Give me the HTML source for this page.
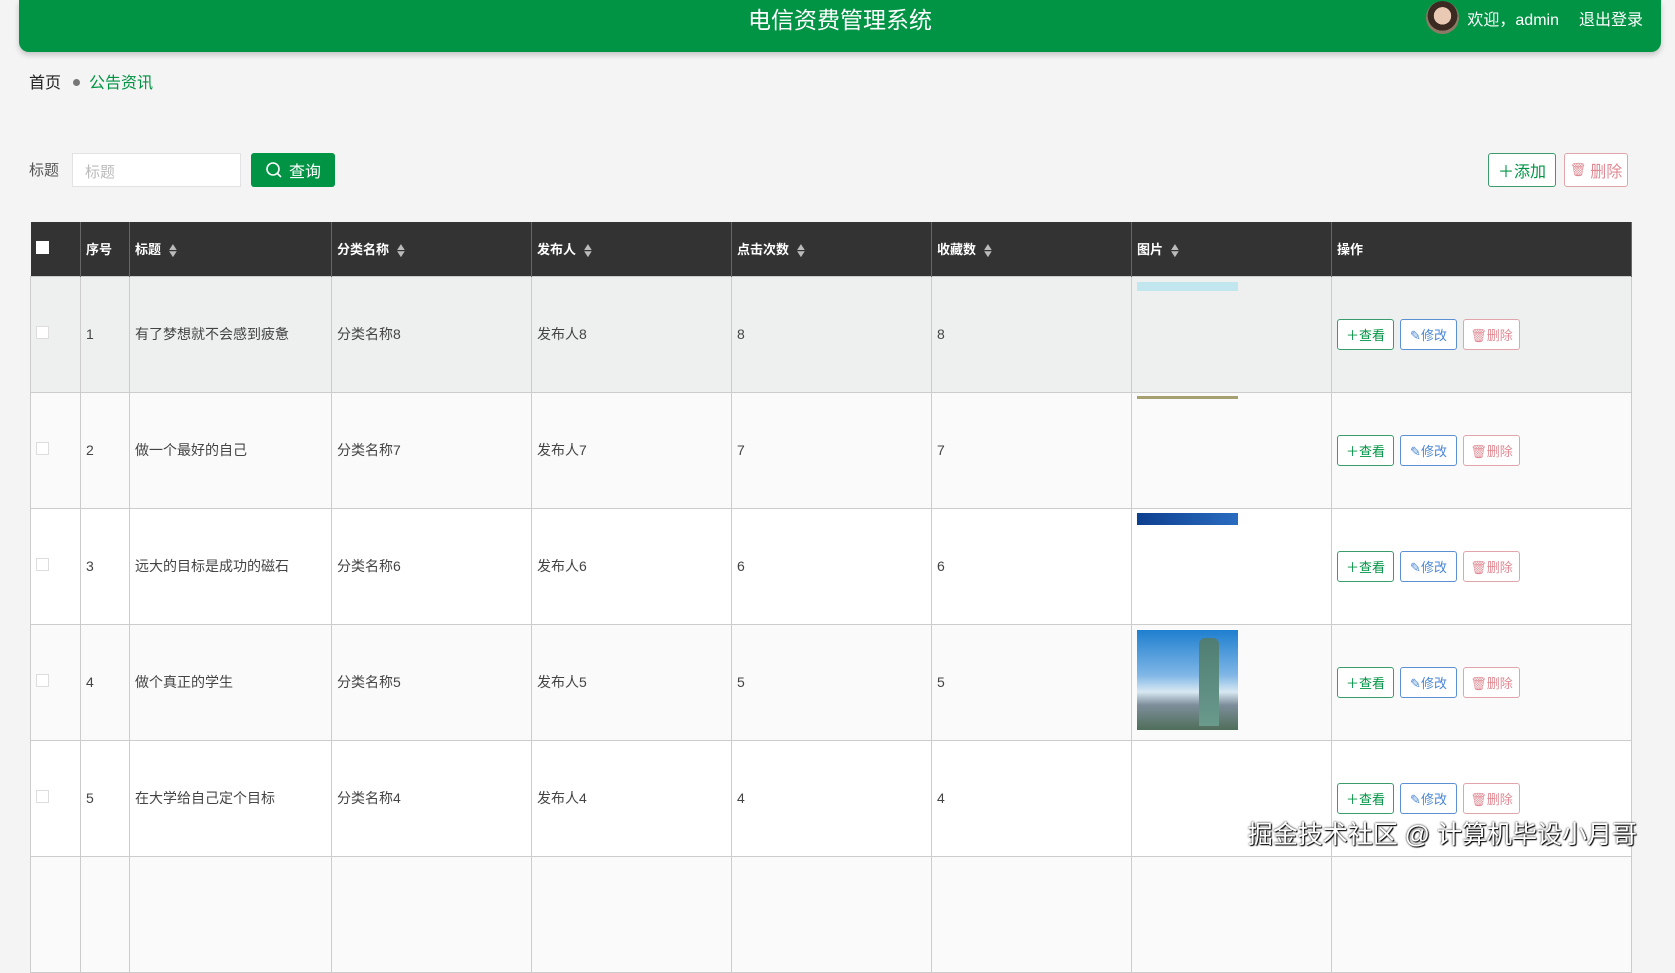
<!DOCTYPE html>
<html><head><meta charset="utf-8"><style>
*{box-sizing:border-box;margin:0;padding:0}
body{width:1675px;height:870px;overflow:hidden;background:#f4f4f4;font-family:"Liberation Sans","Noto Sans CJK SC",sans-serif;position:relative;color:#333}
.hdr{position:absolute;left:19px;top:0;width:1642px;height:52px;background:#009444;border-radius:0 0 10px 10px;box-shadow:0 3px 6px rgba(0,0,0,.2)}
.hdr .t{position:absolute;left:0;right:0;top:1px;text-align:center;color:#fff;font-size:23px}
.hdr .u{position:absolute;right:18px;top:1px;color:#fff;font-size:16px;display:flex;align-items:center}
.av{width:33px;height:33px;border-radius:50%;background:radial-gradient(circle at 50% 45%,#e9c9b3 0 35%,#3b2a22 36% 60%,#8d7a66 61%);margin-right:8px}
.bc{position:absolute;left:29px;top:69px;font-size:16px}
.bc b{font-weight:normal;color:#222}
.bc i{display:inline-block;width:7px;height:7px;border-radius:50%;background:#777;margin:0 9px 2px 12px}
.bc span{color:#009444}
.lbl{position:absolute;left:29px;top:159px;font-size:15px;color:#555}
.inp{position:absolute;left:72px;top:153px;width:169px;height:34px;background:#fff;border:1px solid #e2e2e2;font-size:15px;color:#bbb;padding:7px 12px}
.qb{position:absolute;left:251px;top:153px;width:84px;height:34px;background:#009444;border-radius:3px;color:#fff;font-size:16px;display:flex;align-items:center;justify-content:center;gap:6px}
.ob{position:absolute;height:34px;top:153px;border:1px solid;border-radius:3px;background:#fff;font-size:16px;display:flex;align-items:center;justify-content:center;gap:4px}
table{position:absolute;left:30px;top:222px;border-collapse:collapse;width:1601px;table-layout:fixed}
th{background:#333;color:#fff;height:54px;text-align:left;font-size:13px;padding-left:5px;border-right:1px solid #666;font-weight:bold}
td{height:116px;border:1px solid #ccc;font-size:14px;padding-left:5px;color:#444;vertical-align:middle;position:relative}
tr.a td{background:#fafafa}
tr.f td{background:#eef0f0}
.s{display:inline-block;margin-left:7px;font-size:10px;color:#bbb;line-height:7px;vertical-align:middle;transform:scaleX(1.3)}
.cb{width:13px;height:13px;border:1px solid #ddd;background:#fff;display:inline-block}
.btn{display:inline-flex;align-items:center;justify-content:center;gap:3px;width:57px;height:31px;border:1px solid;border-radius:3px;font-size:13px;margin-right:6px;background:#fff}
.g{color:#009444;border-color:#3c9b6a}.bl{color:#4a86d6;border-color:#5d8fd3}.r{color:#e08a93;border-color:#e0a5ab}
.im{position:absolute;left:5px;width:101px}
.wm{position:absolute;right:38px;top:815px;font-size:25px;color:#fff;text-shadow:0 0 2px #000,1px 1px 1px #000}
</style></head><body>
<div class="hdr"><div class="t">电信资费管理系统</div>
<div class="u"><div class="av"></div>欢迎，admin<span style="margin-left:20px">退出登录</span></div></div>
<div class="bc"><b>首页</b><i></i><span>公告资讯</span></div>
<div class="lbl">标题</div>
<div class="inp">标题</div>
<div class="qb"><svg width="18" height="18" viewBox="0 0 18 18" fill="none" stroke="#fff" stroke-width="1.6"><circle cx="8" cy="8" r="6"/><path d="M12.5 12.5L16 16"/></svg>查询</div>
<div class="ob g" style="left:1488px;width:68px">＋添加</div>
<div class="ob r" style="left:1564px;width:64px"><span style="font-size:13px">🗑</span>删除</div>
<table>
<colgroup><col style="width:50px"><col style="width:49px"><col style="width:202px"><col style="width:200px"><col style="width:200px"><col style="width:200px"><col style="width:200px"><col style="width:200px"><col style="width:300px"></colgroup>
<tr><th><span class="cb" style="border:0"></span></th><th>序号</th><th>标题<span class="s">▲<br>▼</span></th><th>分类名称<span class="s">▲<br>▼</span></th><th>发布人<span class="s">▲<br>▼</span></th><th>点击次数<span class="s">▲<br>▼</span></th><th>收藏数<span class="s">▲<br>▼</span></th><th>图片<span class="s">▲<br>▼</span></th><th>操作</th></tr>
<tr class="f"><td><span class="cb"></span></td><td>1</td><td>有了梦想就不会感到疲惫</td><td>分类名称8</td><td>发布人8</td><td>8</td><td>8</td><td><div class="im" style="top:5px;height:9px;background:#c2e6ee"></div></td><td><span class="btn g">＋查看</span><span class="btn bl">✎修改</span><span class="btn r">🗑删除</span></td></tr>
<tr class="a"><td><span class="cb"></span></td><td>2</td><td>做一个最好的自己</td><td>分类名称7</td><td>发布人7</td><td>7</td><td>7</td><td><div class="im" style="top:3px;height:3px;background:#a6a070"></div></td><td><span class="btn g">＋查看</span><span class="btn bl">✎修改</span><span class="btn r">🗑删除</span></td></tr>
<tr><td style="background:#fff"><span class="cb"></span></td><td style="background:#fff">3</td><td style="background:#fff">远大的目标是成功的磁石</td><td style="background:#fff">分类名称6</td><td style="background:#fff">发布人6</td><td style="background:#fff">6</td><td style="background:#fff">6</td><td style="background:#fff"><div class="im" style="top:4px;height:12px;background:linear-gradient(90deg,#0e3f8f,#2a6cc0)"></div></td><td style="background:#fff"><span class="btn g">＋查看</span><span class="btn bl">✎修改</span><span class="btn r">🗑删除</span></td></tr>
<tr class="a"><td><span class="cb"></span></td><td>4</td><td>做个真正的学生</td><td>分类名称5</td><td>发布人5</td><td>5</td><td>5</td><td><div class="im" style="top:5px;height:100px;background:linear-gradient(180deg,#1f7fcf 0%,#7fb6e6 45%,#d8e8f2 62%,#7d8e9a 75%,#4f6e5a 100%)"><div style="position:absolute;left:62px;top:8px;width:20px;height:88px;background:linear-gradient(#4f7d73,#6a9a8c);border-radius:6px 6px 0 0"></div></div></td><td><span class="btn g">＋查看</span><span class="btn bl">✎修改</span><span class="btn r">🗑删除</span></td></tr>
<tr><td style="background:#fff"><span class="cb"></span></td><td style="background:#fff">5</td><td style="background:#fff">在大学给自己定个目标</td><td style="background:#fff">分类名称4</td><td style="background:#fff">发布人4</td><td style="background:#fff">4</td><td style="background:#fff">4</td><td style="background:#fff"></td><td style="background:#fff"><span class="btn g">＋查看</span><span class="btn bl">✎修改</span><span class="btn r">🗑删除</span></td></tr>
<tr class="a"><td></td><td></td><td></td><td></td><td></td><td></td><td></td><td></td><td></td></tr>
</table>
<div class="wm">掘金技术社区 @ 计算机毕设小月哥</div>
</body></html>
